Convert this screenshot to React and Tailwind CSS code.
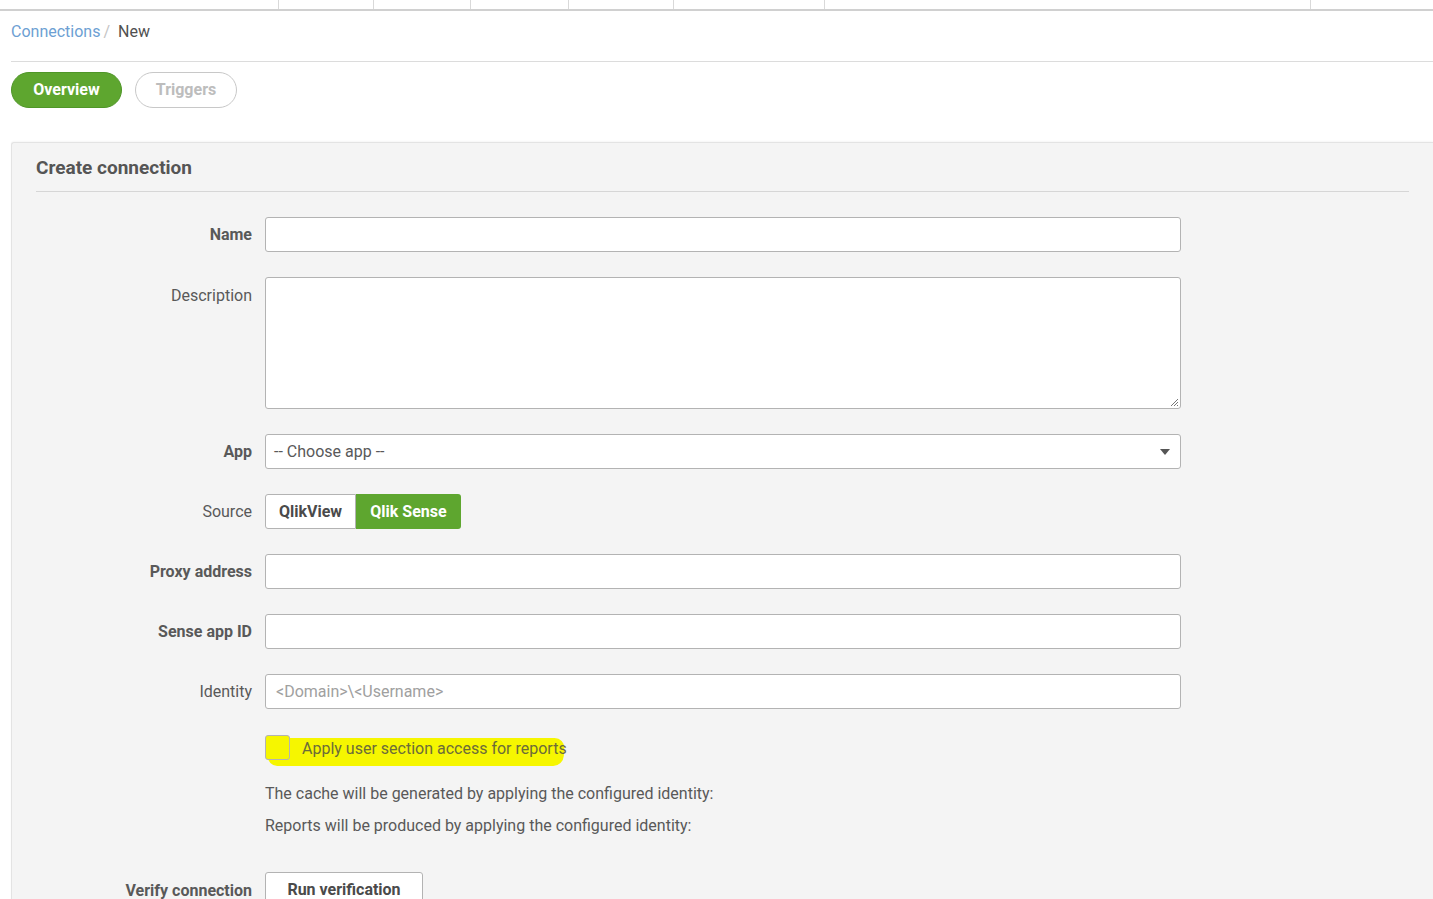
import React from "react";

const font = { fontFamily: "Roboto, 'Liberation Sans', sans-serif" };

function Label({ children, bold, className = "" }) {
  return (
    <div
      className={`w-[253px] shrink-0 pr-[13px] text-right text-[16px] text-[#595959] ${bold ? "font-bold" : ""} ${className}`}
    >
      {children}
    </div>
  );
}

function TextInput({ placeholder }) {
  return (
    <div className="flex h-[35px] w-[916px] items-center rounded-[3px] border border-[#b3b3b3] bg-white px-[10px] text-[16px] text-[#a0a0a0]">
      {placeholder}
    </div>
  );
}

export default function App() {
  return (
    <div style={font} className="min-h-[899px] w-[1433px] overflow-hidden bg-white text-[#595959]">
      {/* top strip */}
      <div className="flex h-[11px] border-b-2 border-[#d0d0d0]">
        <div className="w-[279px] border-r border-[#d9d9d9]" />
        <div className="w-[95px] border-r border-[#d9d9d9]" />
        <div className="w-[97px] border-r border-[#d9d9d9]" />
        <div className="w-[98px] border-r border-[#d9d9d9]" />
        <div className="w-[105px] border-r border-[#d9d9d9]" />
        <div className="w-[151px] border-r border-[#d9d9d9]" />
        <div className="w-[486px] border-r border-[#d9d9d9]" />
      </div>

      {/* breadcrumb */}
      <div className="ml-[11px] flex h-[51px] items-center border-b border-[#dcdcdc] pb-[8px] text-[16px]">
        <span className="text-[#6d9fd3]">Connections</span>
        <span className="ml-[3px] text-[#c4c4c4]">/</span>
        <span className="ml-[8px] text-[#505050]">New</span>
      </div>

      {/* tabs */}
      <div className="ml-[11px] mt-[10px] flex gap-[13px]">
        <div className="flex h-[36px] w-[111px] items-center justify-center rounded-full border border-[#4f9628] bg-[#5ea62f] text-[16px] font-bold text-white">
          Overview
        </div>
        <div className="flex h-[36px] w-[102px] items-center justify-center rounded-full border border-[#c8c8c8] bg-white text-[16px] font-bold text-[#bdbdbd]">
          Triggers
        </div>
      </div>

      {/* panel */}
      <div className="ml-[11px] mt-[34px] rounded-tl-[3px] border-l border-t border-[#e3e3e3] bg-[#f4f4f4] pb-[40px] shadow-[0_-1px_2px_rgba(0,0,0,0.04)]">
        <div className="mx-[24px] flex h-[49px] items-center border-b border-[#d6d6d6] pt-[2px] text-[19px] font-bold text-[#555555]">
          Create connection
        </div>

        <div className="mt-[25px] flex flex-col">
          {/* Name */}
          <div className="flex items-center">
            <Label bold className="pt-[1px]">Name</Label>
            <TextInput />
          </div>

          {/* Description */}
          <div className="mt-[25px] flex items-start">
            <Label className="pt-[7px]">Description</Label>
            <div className="relative h-[132px] w-[916px] rounded-[3px] border border-[#b3b3b3] bg-white">
              <svg className="absolute bottom-[1px] right-[1px]" width="9" height="9" viewBox="0 0 9 9">
                <path d="M8 1 L1 8 M8 4 L4 8 M8 7 L7 8" stroke="#777" strokeWidth="1" />
              </svg>
            </div>
          </div>

          {/* App */}
          <div className="mt-[25px] flex items-center">
            <Label bold>App</Label>
            <div className="flex h-[35px] w-[916px] items-center justify-between rounded-[3px] border border-[#b3b3b3] bg-white pl-[8px] pr-[10px] text-[16px] text-[#595959]">
              <span>-- Choose app --</span>
              <svg width="10" height="6" viewBox="0 0 10 6">
                <path d="M0 0 L10 0 L5 6 Z" fill="#555" />
              </svg>
            </div>
          </div>

          {/* Source */}
          <div className="mt-[25px] flex items-center">
            <Label>Source</Label>
            <div className="flex h-[35px]">
              <div className="flex w-[91px] items-center justify-center rounded-l-[3px] border border-[#b3b3b3] bg-white text-[16px] font-bold text-[#4a4a4a]">
                QlikView
              </div>
              <div className="flex w-[105px] items-center justify-center rounded-r-[3px] bg-[#5ea62f] text-[16px] font-bold text-white">
                Qlik Sense
              </div>
            </div>
          </div>

          {/* Proxy address */}
          <div className="mt-[25px] flex items-center">
            <Label bold>Proxy address</Label>
            <TextInput />
          </div>

          {/* Sense app ID */}
          <div className="mt-[25px] flex items-center">
            <Label bold>Sense app ID</Label>
            <TextInput />
          </div>

          {/* Identity */}
          <div className="mt-[25px] flex items-center">
            <Label>Identity</Label>
            <TextInput placeholder="<Domain>\<Username>" />
          </div>

          {/* checkbox */}
          <div className="mt-[25px] flex items-center">
            <div className="w-[253px] shrink-0" />
            <div className="relative flex items-center">
              <div className="absolute left-[3px] top-[4px] h-[28px] w-[296px] -skew-x-3 rounded-[10px] bg-[#f6f600]" />
              <div className="relative h-[25px] w-[25px] rounded-[3px] border border-[#b3b3b3] bg-[#f6f600]" />
              <span className="relative ml-[12px] pt-[3px] text-[16px] text-[#6b6b3a]">
                Apply user section access for reports
              </span>
            </div>
          </div>

          {/* info lines */}
          <div className="ml-[253px] mt-[17px] text-[16px] leading-[32px] text-[#595959]">
            <div>The cache will be generated by applying the configured identity:</div>
            <div>Reports will be produced by applying the configured identity:</div>
          </div>

          {/* verify */}
          <div className="mt-[30px] flex items-center">
            <Label bold className="pt-[2px]">Verify connection</Label>
            <div className="flex h-[35px] w-[158px] items-center justify-center rounded-[3px] border border-[#b3b3b3] bg-white text-[16px] font-bold text-[#4a4a4a]">
              Run verification
            </div>
          </div>
        </div>
      </div>
    </div>
  );
}
